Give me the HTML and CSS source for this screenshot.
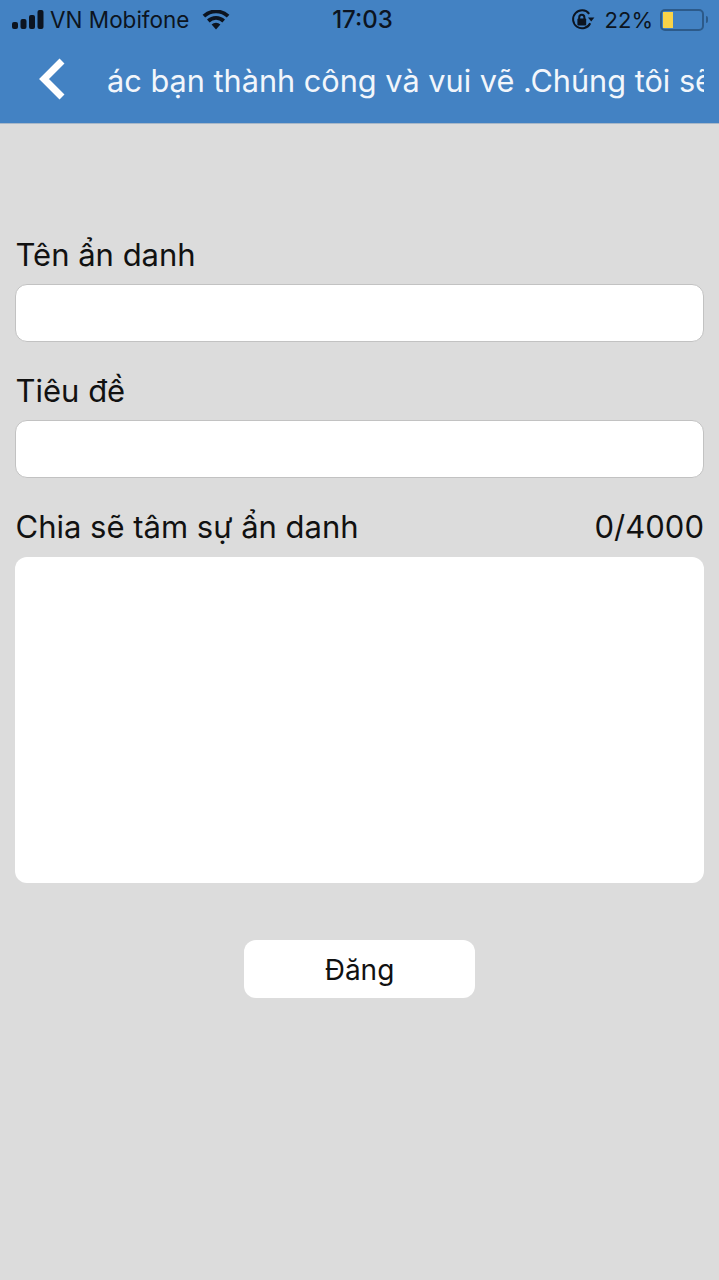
FILE: index.html
```html
<!DOCTYPE html>
<html lang="vi">

<head>
    <meta charset="UTF-8">
    <meta name="viewport" content="width=device-width, initial-scale=1.0">
    <title>Chia sẽ tâm sự ẩn danh</title>
    <link rel="stylesheet" href="styles.css">
</head>

<body>
    <header class="top-bar">
        <div class="status-bar">
            <div class="status-left">
                <svg class="signal" width="32" height="20" viewBox="0 0 32 20">
                    <rect x="0" y="12" width="6" height="7" rx="2"></rect>
                    <rect x="8.5" y="9" width="6" height="10" rx="2"></rect>
                    <rect x="17" y="5" width="6" height="14" rx="2"></rect>
                    <rect x="25.5" y="0" width="6" height="19" rx="2"></rect>
                </svg>
                <span class="carrier">VN Mobifone</span>
                <svg class="wifi" width="28" height="20" viewBox="0 0 28 20">
                    <path d="M14 19.5 9.6 14.6a6.4 6.4 0 0 1 8.8 0z"></path>
                    <path d="M7.6 12.4 5 9.6a13 13 0 0 1 18 0l-2.6 2.8a9.3 9.3 0 0 0-12.8 0z"></path>
                    <path d="M3.2 7.6.6 4.8a19.6 19.6 0 0 1 26.8 0l-2.6 2.8a15.8 15.8 0 0 0-21.6 0z"></path>
                </svg>
            </div>
            <div class="status-time">17:03</div>
            <div class="status-right">
                <svg class="rotation-lock" width="24" height="24" viewBox="0 0 24 24">
                    <path class="lock-ring" d="M19.2 15.2A9 9 0 1 1 18.2 5.8"></path>
                    <path d="M17 9.6h6.4l-3.2 4z"></path>
                    <path class="lock-shackle" d="M8.2 11V9.4a2.6 2.6 0 0 1 5.2 0V11"></path>
                    <rect x="6.4" y="10.6" width="8.8" height="6.8" rx="1"></rect>
                </svg>
                <span class="battery-pct">22%</span>
                <div class="battery">
                    <div class="battery-body">
                        <div class="battery-level"></div>
                    </div>
                    <div class="battery-tip"></div>
                </div>
            </div>
        </div>
        <div class="nav-bar">
            <svg class="back" width="30" height="44" viewBox="0 0 30 44">
                <path d="M25 4 7 22l18 18"></path>
            </svg>
            <div class="nav-title">
                <span class="nav-title-text">ác bạn thành công và vui vẽ .Chúng tôi sẽ</span>
            </div>
        </div>
    </header>

    <form class="post-form">
        <label class="field-label">Tên ẩn danh</label>
        <div class="text-input"></div>

        <label class="field-label">Tiêu đề</label>
        <div class="text-input"></div>

        <div class="label-row">
            <label class="field-label">Chia sẽ tâm sự ẩn danh</label>
            <span class="counter">0/4000</span>
        </div>
        <div class="text-area"></div>

        <button type="button" class="submit-btn">Đăng</button>
    </form>
</body>

</html>
```

FILE: styles.css
```css
* {
    margin: 0;
    padding: 0;
    box-sizing: border-box;
    font-family: 'Inter', 'Liberation Sans', sans-serif;
}

body {
    background-color: #dcdcdc;
    min-height: 1280px;
    overflow: hidden;
    color: #111;
}

.top-bar {
    background-color: #4382c3;
    height: 124px;
    border-bottom: 1px solid #a9b8c8;
}

.status-bar {
    height: 39px;
    padding: 0 11px 0 12px;
    display: flex;
    align-items: center;
    justify-content: space-between;
    font-size: 22.5px;
    color: #0c1420;
}

.status-left {
    width: 262px;
    display: flex;
    align-items: center;
}

.signal {
    fill: #0c1420;
}

.carrier {
    margin-left: 6px;
    white-space: nowrap;
}

.wifi {
    margin-left: 13px;
    fill: #0c1420;
}

.status-time {
    font-size: 24px;
    font-weight: 500;
}

.status-right {
    width: 257px;
    display: flex;
    align-items: center;
    justify-content: flex-end;
}

.rotation-lock {
    fill: #0c1420;
    margin-right: 10px;
}

.lock-ring,
.lock-shackle {
    fill: none;
    stroke: #0c1420;
    stroke-width: 2;
}

.battery-pct {
    font-size: 22px;
    margin-right: 7px;
}

.battery {
    display: flex;
    align-items: center;
}

.battery-body {
    width: 44px;
    height: 22px;
    border: 2px solid #2c5a8a;
    border-radius: 5px;
    padding: 1px;
}

.battery-level {
    width: 10px;
    height: 100%;
    background-color: #f9d348;
}

.battery-tip {
    width: 2px;
    height: 7px;
    margin-left: 2px;
    background-color: #2c5a8a;
    border-radius: 0 2px 2px 0;
}

.nav-bar {
    height: 84px;
    display: flex;
    align-items: center;
    padding-left: 37px;
}

.back {
    fill: none;
    stroke: white;
    stroke-width: 7;
    margin-bottom: 4px;
}

.nav-title {
    width: 597px;
    margin-left: 40px;
    overflow: hidden;
    white-space: nowrap;
    margin-bottom: 2px;
}

.nav-title-text {
    font-size: 30.7px;
    color: #f2f6fb;
}

.post-form {
    padding: 112px 15px 0 15px;
}

.field-label {
    display: block;
    font-size: 31px;
    line-height: 36px;
    padding: 1px 0 0 0.5px;
    margin-bottom: 11px;
}

.text-input {
    height: 58px;
    background: white;
    border: 1px solid #c2c2c2;
    border-radius: 12px;
    margin-bottom: 30px;
}

.label-row {
    display: flex;
    justify-content: space-between;
    align-items: baseline;
}

.label-row .field-label {
    margin-bottom: 12px;
}

.counter {
    font-size: 31px;
    line-height: 36px;
}

.text-area {
    height: 326px;
    background: white;
    border-radius: 12px;
}

.submit-btn {
    display: block;
    width: 231px;
    height: 58px;
    margin: 57px auto 0 auto;
    padding-top: 2px;
    background: white;
    border: none;
    border-radius: 12px;
    font-size: 28px;
    color: #111;
}
```
